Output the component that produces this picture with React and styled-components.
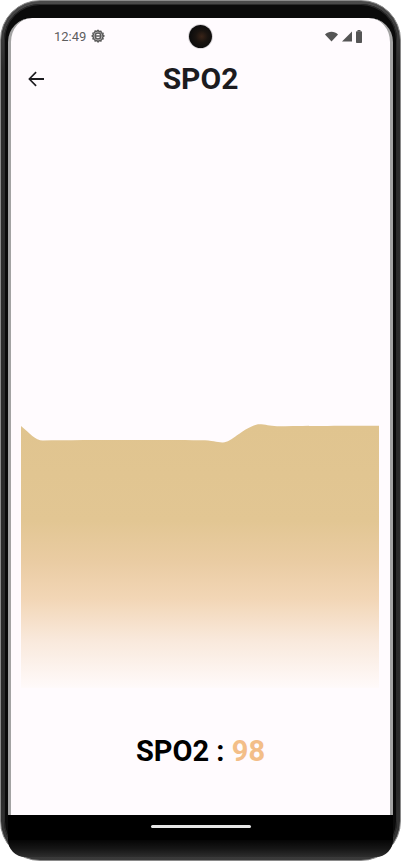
import React from "react";
import styled, { createGlobalStyle } from "styled-components";

const Global = createGlobalStyle`
  html, body { margin: 0; padding: 0; background: #ffffff; }
  body { font-family: Roboto, "Noto Sans", sans-serif; }
  * { box-sizing: border-box; }
`;

const Phone = styled.div`
  width: 401px;
  height: 861px;
  border-radius: 40px;
  padding: 3px;
  background: linear-gradient(180deg, #4a4a4a 0%, #2c2c2c 8%, #2a2a2a 92%, #3a3a3a 100%);
  border: 1px solid #8a8a8a;
`;

const Bezel = styled.div`
  height: 100%;
  border-radius: 36px;
  background: #0a0a0a;
  padding: 14px 4px 0 4px;
  display: flex;
  flex-direction: column;
  box-shadow: inset 0 0 0 1px #2a2a2a;
`;

const Screen = styled.div`
  height: 797px;
  border-left: 3px solid #a3a3a3;
  border-right: 3px solid #a3a3a3;
  border-radius: 24px 24px 0 0;
  background: #fffbfe;
  display: flex;
  flex-direction: column;
  overflow: hidden;
`;

const StatusBar = styled.div`
  height: 36px;
  display: grid;
  grid-template-columns: 1fr auto 1fr;
  align-items: center;
`;

const StatusLeft = styled.div`
  display: flex;
  align-items: center;
  gap: 5px;
  padding-left: 43px;
  color: #5e5e5e;
  font-size: 13px;
  letter-spacing: 0;
`;

const StatusRight = styled.div`
  display: flex;
  align-items: center;
  justify-content: flex-end;
  gap: 3px;
  padding-right: 27px;
`;

const Camera = styled.div`
  width: 23px;
  height: 23px;
  border-radius: 50%;
  margin-top: 1px;
  background: radial-gradient(circle at 55% 50%, #3a2418 0%, #1a1410 35%, #0c0c0c 70%, #050505 100%);
  box-shadow: 0 0 0 1px rgba(0,0,0,0.15);
`;

const TopBar = styled.div`
  height: 50px;
  display: grid;
  grid-template-columns: 48px 1fr 48px;
  align-items: center;
  padding: 0 13px;
`;

const BackButton = styled.div`
  width: 24px;
  height: 24px;
  display: flex;
`;

const Title = styled.h1`
  margin: 0;
  text-align: center;
  font-size: 30px;
  font-weight: 700;
  color: #1c1b1f;
  line-height: 1;
`;

const ChartArea = styled.div`
  height: 584px;
  padding: 0 11px 0 10px;
  svg { display: block; }
`;

const ValueRow = styled.div`
  flex: 1;
  display: flex;
  align-items: center;
  justify-content: center;
  font-size: 29px;
  font-weight: 700;
  color: #000;
  padding-bottom: 1px;
`;

const Value = styled.span`
  color: ${(p) => p.$color};
  margin-left: 0.25em;
`;

const NavBar = styled.div`
  height: 25px;
  background: #000;
  display: flex;
  justify-content: center;
  padding-top: 10px;
`;

const HomeIndicator = styled.div`
  width: 100px;
  height: 3px;
  border-radius: 2px;
  background: #e6e6e6;
`;

const BottomBezel = styled.div`
  flex: 1;
  border-radius: 0 0 32px 32px;
  background: linear-gradient(180deg, #050505 0%, #151515 50%, #2e2e2e 100%);
`;

const Gear = () => (
  <svg width="14" height="14" viewBox="0 0 24 24" fill="none" stroke="#5a5a5a" strokeWidth="2.6">
    <path d="M12 2.2l2 2.4 3-.9.6 3.1 3.1.6-.9 3L22.2 12l-2.4 1.9.9 3-3.1.6-.6 3.1-3-.9-2 2.4-1.9-2.4-3 .9-.6-3.1-3.1-.6.9-3L1.8 12l2.4-1.9-.9-3 3.1-.6.6-3.1 3 .9z" strokeLinejoin="round" />
    <circle cx="12" cy="12" r="5" />
    <path d="M7 12h10" />
  </svg>
);

const Wifi = () => (
  <svg width="13" height="11" viewBox="0 0 13 11">
    <path d="M0 3.6C1.8 1.8 4 0.8 6.5 0.8S11.2 1.8 13 3.6L6.5 10.4z" fill="#555" />
  </svg>
);

const Signal = () => (
  <svg width="11" height="11" viewBox="0 0 11 11">
    <path d="M11 0.5V10.5H1z" fill="#555" />
  </svg>
);

const Battery = () => (
  <svg width="8" height="13" viewBox="0 0 8 13">
    <rect x="2.5" y="0" width="3" height="1.5" fill="#555" />
    <rect x="1" y="1.2" width="6" height="11.8" rx="0.8" fill="#555" />
  </svg>
);

const BackArrow = () => (
  <svg width="24" height="24" viewBox="0 0 24 24">
    <path d="M20 11.1H7.4l5.3-5.3-1.2-1.2L4.2 12l7.3 7.4 1.2-1.2-5.3-5.3H20z" fill="#1c1b1f" />
  </svg>
);

const Chart = () => (
  <svg width="358" height="584" viewBox="0 0 358 584">
    <defs>
      <linearGradient id="spoFill" x1="0" y1="322" x2="0" y2="584" gradientUnits="userSpaceOnUse">
        <stop offset="0" stopColor="#e0c48f" />
        <stop offset="0.36" stopColor="#e2c693" />
        <stop offset="0.52" stopColor="#eacca3" />
        <stop offset="0.66" stopColor="#f2d6b6" />
        <stop offset="0.82" stopColor="#f9e9dc" />
        <stop offset="1" stopColor="#fffafa" />
      </linearGradient>
    </defs>
    <path
      d="M0,322 C9,329 14,336.5 22,336.6 C60,336 130,336 180,336.3 C192,336.3 196,338.6 202,338.4 C211,338.2 220,325 236,320.4 C244,320 248,322.2 256,322.2 C300,321.8 330,321.7 358,321.7 L358,584 L0,584 Z"
      fill="url(#spoFill)"
    />
  </svg>
);

export default function App() {
  return (
    <>
      <Global />
      <Phone>
        <Bezel>
          <Screen>
            <StatusBar>
              <StatusLeft>
                <span>12:49</span>
                <Gear />
              </StatusLeft>
              <Camera />
              <StatusRight>
                <Wifi />
                <Signal />
                <Battery />
              </StatusRight>
            </StatusBar>
            <TopBar>
              <BackButton>
                <BackArrow />
              </BackButton>
              <Title>SPO2</Title>
              <span />
            </TopBar>
            <ChartArea>
              <Chart />
            </ChartArea>
            <ValueRow>
              SPO2 :<Value $color="#f3be88">98</Value>
            </ValueRow>
          </Screen>
          <NavBar>
            <HomeIndicator />
          </NavBar>
          <BottomBezel />
        </Bezel>
      </Phone>
    </>
  );
}
